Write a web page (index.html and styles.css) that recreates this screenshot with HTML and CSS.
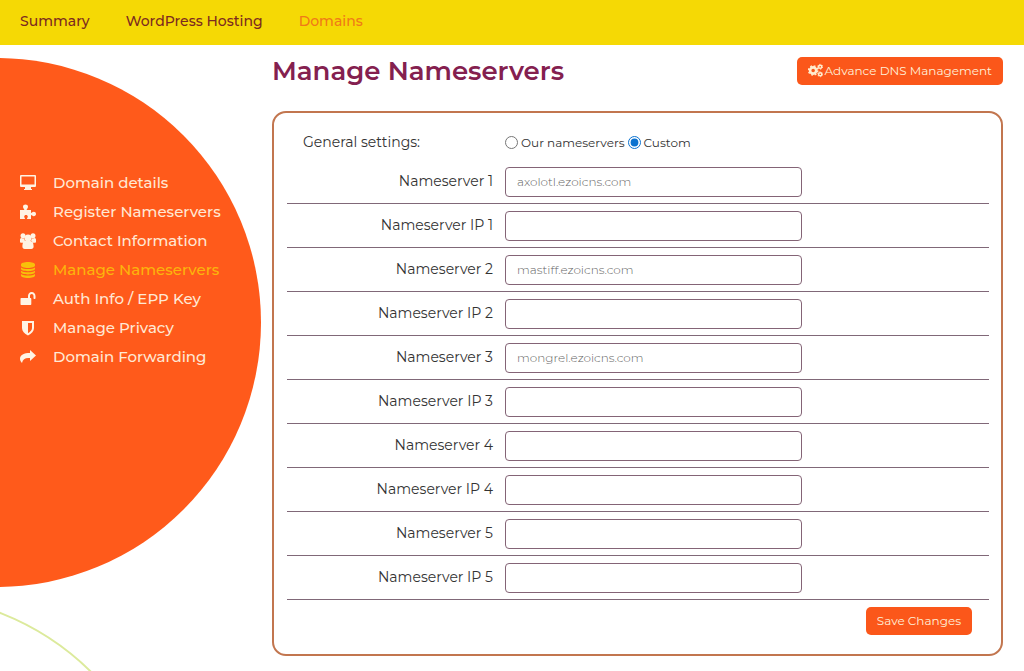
FILE: index.html
```html
<!DOCTYPE html>
<html lang="en">

<head>
    <meta charset="UTF-8">
    <meta name="viewport" content="width=device-width, initial-scale=1.0">
    <title>Manage Nameservers</title>
    <link rel="stylesheet" href="styles.css">
</head>

<body>

    <nav class="topbar">
        <a href="#">Summary</a>
        <a href="#">WordPress Hosting</a>
        <a href="#" class="active">Domains</a>
    </nav>

    <div class="page">
        <aside class="sidebar">
            <ul class="menu">
                <li><a href="#">
                    <svg viewBox="0 0 16 16"><path fill-rule="evenodd" d="M1 0h14a1 1 0 0 1 1 1v10a1 1 0 0 1-1 1h-4v2h1v1H4v-1h1v-2H1a1 1 0 0 1-1-1V1a1 1 0 0 1 1-1zm.5 1.500v8h13v-8z"/></svg>
                    Domain details</a></li>
                <li><a href="#">
                    <svg viewBox="0 0 16 16"><path d="M0 6h4.400C4.200 4.800 3 4.400 3 2.800 3 1.200 4.200.500 5.500.500S8 1.200 8 2.800C8 4.400 6.800 4.800 6.600 6H11v3c1 0 1.400-1.200 2.800-1.200 1.200 0 2.200.9 2.200 2.200s-1 2.200-2.200 2.200c-1.400 0-1.800-1.200-2.800-1.200v4H7c0-1.200.8-1.400.8-2.500 0-1-.8-1.600-1.800-1.600s-1.800.6-1.800 1.600c0 1.100.8 1.300.8 2.500H0z"/></svg>
                    Register Nameservers</a></li>
                <li><a href="#">
                    <svg viewBox="0 0 16 16"><circle cx="3" cy="2.700" r="2.500"/><circle cx="13" cy="2.700" r="2.500"/><circle cx="8" cy="5" r="3.500"/><path d="M0 9V7c0-1.200.5-1.900 1.500-1.900L3 5.600l1.300-.4c0 1.400.4 2.200 1 3C4.300 8.400 3.500 9 3 9.800H1Q0 9.800 0 9zM16 9V7c0-1.200-.5-1.900-1.500-1.900L13 5.600l-1.300-.4c0 1.400-.4 2.200-1 3 1 .2 1.800.8 2.300 1.600h2q1 0 1-.8zM2.400 13.500c0-3 .8-5.500 3.100-5.500h5c2.300 0 3.100 2.500 3.100 5.500 0 1.600-.8 2.500-2.300 2.500H4.700c-1.500 0-2.300-.9-2.300-2.500z"/></svg>
                    Contact Information</a></li>
                <li><a href="#" class="active">
                    <svg viewBox="0 0 16 16"><path d="M1 2.500C1 1 4 0 8 0s7 1 7 2.500v1C15 5 12 6 8 6S1 5 1 3.500zM1 5.400C2.500 6.500 5 7 8 7s5.500-.5 7-1.600v1.400c0 1.500-3 2.400-7 2.400S1 8.300 1 6.800zM1 8.700c1.500 1.100 4 1.600 7 1.600s5.500-.5 7-1.600v1.400c0 1.500-3 2.400-7 2.400s-7-.9-7-2.400zM1 12c1.500 1.100 4 1.600 7 1.600s5.500-.5 7-1.600v1.500c0 1.500-3 2.500-7 2.500s-7-1-7-2.500z"/></svg>
                    Manage Nameservers</a></li>
                <li><a href="#">
                    <svg viewBox="0 0 16 16"><path d="M1.500 7H8V5c0-2.300 1.500-4 3.700-4s3.800 1.700 3.800 4v2.200c0 .5-.3.800-.8.800h-.4c-.5 0-.8-.3-.8-.8V5c0-1.200-.7-2-1.800-2S10 3.800 10 5v2h.3c.6 0 1 .4 1 1v5c0 .6-.4 1-1 1H1.500c-.6 0-1-.4-1-1V8c0-.6.4-1 1-1z"/></svg>
                    Auth Info / EPP Key</a></li>
                <li><a href="#">
                    <svg viewBox="0 0 16 16"><path fill-rule="evenodd" d="M2 1h12v7c0 3.200-2.400 5.700-6 7.500C4.400 13.700 2 11.200 2 8zm6 2v10.200c2.600-1.500 4-3.200 4-5.200V3z"/></svg>
                    Manage Privacy</a></li>
                <li><a href="#">
                    <svg viewBox="0 0 16 16"><path d="M10 1 16 6.500l-6 5.500V9C5.500 8.500 2.800 9.800 2 14 .8 13 0 11.500 0 9.800 0 5.800 4 4 10 4z"/></svg>
                    Domain Forwarding</a></li>
            </ul>
        </aside>

        <main class="content">
            <div class="title-row">
                <h1>Manage Nameservers</h1>
                <button type="button" class="btn">
                    <svg viewBox="0 0 16 16">
                        <circle class="gear" cx="5.500" cy="8" r="3.300"/>
                        <circle class="teeth" cx="5.500" cy="8" r="4.900"/>
                        <circle class="gear-small" cx="13" cy="4" r="1.700"/>
                        <circle class="teeth-small" cx="13" cy="4" r="2.600"/>
                        <circle class="gear-small" cx="13" cy="12" r="1.700"/>
                        <circle class="teeth-small" cx="13" cy="12" r="2.600"/>
                    </svg>
                    Advance DNS Management
                </button>
            </div>

            <form class="card">
                <div class="settings" role="radiogroup" aria-labelledby="settings-title">
                    <span id="settings-title">General settings:</span>
                    <div class="options">
                        <input type="radio" id="ns-own" name="ns-type">
                        <label for="ns-own">Our nameservers</label>
                        <input type="radio" id="ns-custom" name="ns-type" checked>
                        <label for="ns-custom">Custom</label>
                    </div>
                </div>

                <div class="form-row">
                    <label for="ns1">Nameserver 1</label>
                    <input type="text" id="ns1" value="axolotl.ezoicns.com">
                </div>
                <div class="form-row">
                    <label for="ip1">Nameserver IP 1</label>
                    <input type="text" id="ip1">
                </div>
                <div class="form-row">
                    <label for="ns2">Nameserver 2</label>
                    <input type="text" id="ns2" value="mastiff.ezoicns.com">
                </div>
                <div class="form-row">
                    <label for="ip2">Nameserver IP 2</label>
                    <input type="text" id="ip2">
                </div>
                <div class="form-row">
                    <label for="ns3">Nameserver 3</label>
                    <input type="text" id="ns3" value="mongrel.ezoicns.com">
                </div>
                <div class="form-row">
                    <label for="ip3">Nameserver IP 3</label>
                    <input type="text" id="ip3">
                </div>
                <div class="form-row">
                    <label for="ns4">Nameserver 4</label>
                    <input type="text" id="ns4">
                </div>
                <div class="form-row">
                    <label for="ip4">Nameserver IP 4</label>
                    <input type="text" id="ip4">
                </div>
                <div class="form-row">
                    <label for="ns5">Nameserver 5</label>
                    <input type="text" id="ns5">
                </div>
                <div class="form-row">
                    <label for="ip5">Nameserver IP 5</label>
                    <input type="text" id="ip5">
                </div>

                <div class="actions">
                    <button type="submit" class="btn">Save Changes</button>
                </div>
            </form>
        </main>
    </div>

</body>

</html>
```
FILE: styles.css
```css
* {
    box-sizing: border-box;
}

body {
    font-family: Montserrat, Inter, sans-serif;
    font-size: 14px;
    font-weight: 400;
    color: #333;
    background-color: #fff;
    margin: 0;
}

a {
    text-decoration: none;
}

.topbar {
    display: flex;
    align-items: center;
    gap: 36px;
    height: 45px;
    padding: 0 20px 4px;
    background-color: #f5d905;
}

.topbar a {
    font-weight: 500;
    color: #7c2a20;
}

.topbar a.active {
    color: #f07a18;
}

.page {
    position: relative;
    display: grid;
    grid-template-columns: 272px minmax(0, 1fr);
    min-height: calc(100vh - 45px);
    overflow: hidden;
}

/* big orange disc behind the menu */
.sidebar::before {
    content: "";
    position: absolute;
    left: -268px;
    top: 13px;
    width: 529px;
    height: 529px;
    border-radius: 50%;
    background-color: #ff5a1b;
}

/* thin green ring under it */
.sidebar::after {
    content: "";
    position: absolute;
    left: -363px;
    top: 549px;
    width: 530px;
    height: 530px;
    border: 2px solid #dcea9c;
    border-radius: 50%;
}

.menu {
    position: relative;
    z-index: 1;
    list-style: none;
    margin: 0;
    padding: 123px 0 0 20px;
}

.menu a {
    display: flex;
    align-items: center;
    gap: 17px;
    height: 29px;
    font-size: 15px;
    font-weight: 500;
    color: #ffe8d4;
    white-space: nowrap;
}

.menu svg {
    flex: none;
    width: 16px;
    height: 16px;
    fill: #fff4e4;
}

.menu a.active {
    color: #fcb40c;
}

.menu a.active svg {
    fill: #f8c00a;
}

.content {
    padding: 12px 21px 15px 0;
}

.title-row {
    display: flex;
    justify-content: space-between;
    align-items: flex-start;
    height: 54px;
}

h1 {
    font-size: 26px;
    line-height: 28px;
    font-weight: 600;
    color: #84204f;
    margin: 0;
}

.btn {
    display: flex;
    align-items: center;
    gap: 1px;
    height: 28px;
    padding: 0 11px 2px;
    font-family: inherit;
    font-size: 12px;
    color: #fff0d8;
    background-color: #fb571a;
    border: none;
    border-radius: 5px;
    cursor: pointer;
}

.btn svg {
    width: 15px;
    height: 15px;
    fill: none;
    stroke: #ffedcf;
}

.gear {
    stroke-width: 2.800;
}

.teeth {
    stroke-width: 1.600;
    stroke-dasharray: 1.950 1.898;
}

.gear-small {
    stroke-width: 1.600;
}

.teeth-small {
    stroke-width: 1;
    stroke-dasharray: 1.400 1.323;
}

.card {
    padding: 0 12px 19px 13px;
    border: 2px solid #c2764f;
    border-radius: 14px;
}

.settings {
    display: grid;
    grid-template-columns: 190px 1fr;
    gap: 12px;
    align-items: center;
    height: 47px;
    padding: 11px 0 0 16px;
}

.options {
    display: flex;
    align-items: center;
    gap: 3px;
    font-size: 12px;
}

.options input {
    width: 13px;
    height: 13px;
    margin: 0;
    accent-color: #0b72d0;
}

.form-row {
    display: grid;
    grid-template-columns: 206px minmax(0, 297px);
    gap: 12px;
    padding: 7px 0 6px;
    border-bottom: 1px solid #806878;
}

.form-row label {
    line-height: 28px;
    text-align: right;
}

.form-row input {
    width: 100%;
    height: 30px;
    padding: 0 11px 1px;
    font-family: inherit;
    font-size: 12px;
    font-weight: 300;
    color: #666;
    background-color: #fff;
    border: 1px solid #846476;
    border-radius: 4px;
}

.form-row input:focus {
    border-color: #ff5a1b;
    outline: none;
}

.actions {
    display: flex;
    justify-content: flex-end;
    padding: 7px 17px 0 0;
}
```
